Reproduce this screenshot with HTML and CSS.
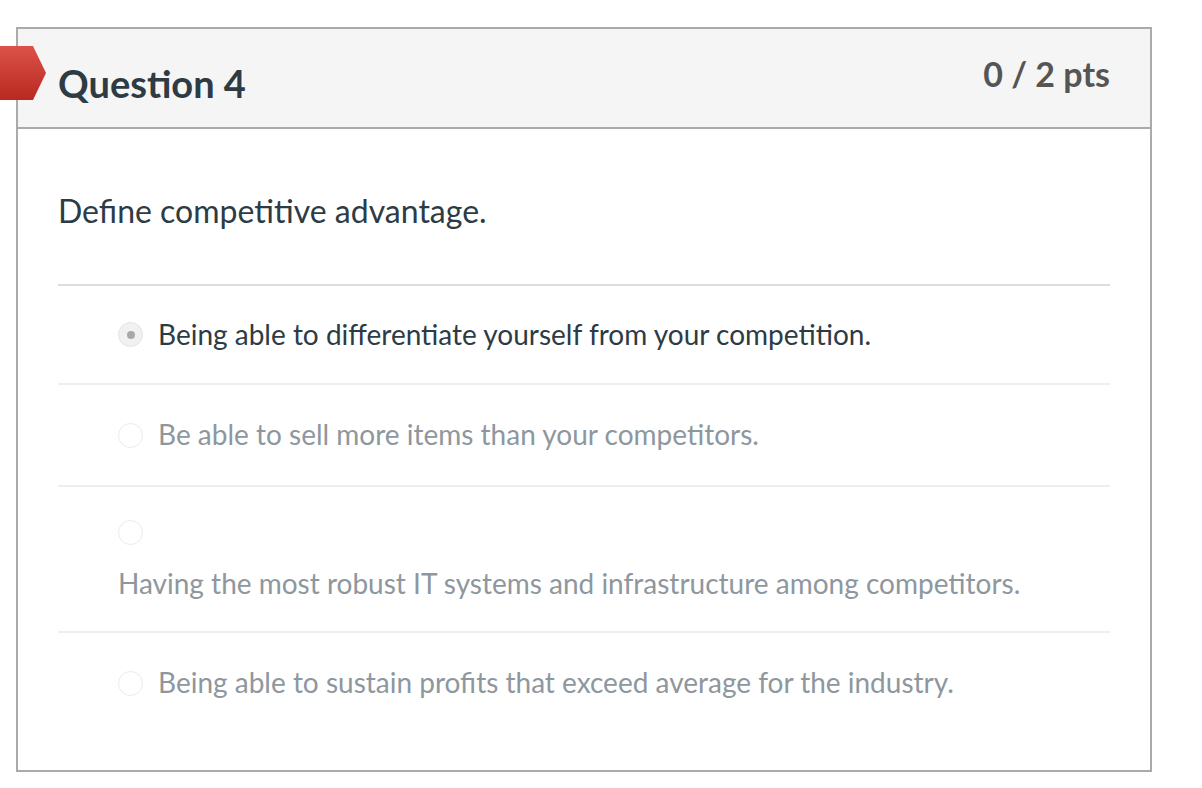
FILE: index.html
```html
<!DOCTYPE html>
<html>
<head>
<meta charset="utf-8">
<link rel="stylesheet" href="styles.css">
</head>
<body>
<div class="page">
  <div class="flag"></div>
  <div class="question">
    <div class="header">
      <h2 class="title">Question 4</h2>
      <div class="pts">0 / 2 pts</div>
    </div>
    <div class="content">
      <p class="qtext">Define competitive advantage.</p>
      <div class="answers">
        <div class="answer selected a1">
          <span class="radio"></span>
          <span class="label">Being able to differentiate yourself from your competition.</span>
        </div>
        <div class="answer a2">
          <span class="radio"></span>
          <span class="label">Be able to sell more items than your competitors.</span>
        </div>
        <div class="answer block">
          <span class="radio"></span>
          <div class="label">Having the most robust IT systems and infrastructure among competitors.</div>
        </div>
        <div class="answer last">
          <span class="radio"></span>
          <span class="label">Being able to sustain profits that exceed average for the industry.</span>
        </div>
      </div>
    </div>
  </div>
</div>
</body>
</html>
```
FILE: styles.css
```css
html, body {
  margin: 0;
  padding: 0;
  background: #fff;
}
body {
  font-family: Lato, "Open Sans", sans-serif;
  color: #2d3b45;
}
.page {
  position: relative;
  padding: 27px 0 0 16px;
  width: 1136px;
}
.flag {
  position: absolute;
  left: 0;
  top: 46px;
  width: 46px;
  height: 54px;
  background: linear-gradient(#dc5249, #b8291f);
  clip-path: polygon(0 0, 33px 0, 46px 27px, 33px 54px, 0 54px);
}
.question {
  border: 2px solid #aaaaaa;
  height: 745px;
  box-sizing: border-box;
}
.header {
  background: #f5f5f5;
  border-bottom: 2px solid #aaaaaa;
  height: 100px;
  box-sizing: border-box;
  display: flex;
  justify-content: space-between;
  padding: 0 40px;
}
.title {
  margin: 0;
  font-size: 38px;
  font-weight: 700;
  color: #2d3b45;
  line-height: 38px;
  padding-top: 35px;
}
.pts {
  font-size: 34px;
  font-weight: 700;
  color: #555555;
  line-height: 34px;
  padding-top: 28px;
}
.content {
  padding: 0 40px;
}
.qtext {
  margin: 0;
  font-size: 32px;
  line-height: 32px;
  padding-top: 66px;
  padding-bottom: 57px;
  border-bottom: 2px solid #dddddd;
}
.answer {
  display: flex;
  align-items: center;
  padding-left: 60px;
  border-bottom: 2px solid #eeeeee;
  font-size: 28px;
  line-height: 1.2;
  color: #8e979e;
}
.a1 { height: 97px; }
.a2 { height: 100px; }
.answer.selected {
  color: #2d3b45;
}
.answer.block {
  display: block;
  height: 146px;
  padding-top: 33px;
  box-sizing: border-box;
}
.answer.last {
  height: 100px;
  border-bottom: none;
}
.radio {
  width: 25px;
  height: 25px;
  border-radius: 50%;
  border: 1px solid #ebebeb;
  box-sizing: border-box;
  background: #fff;
  flex: none;
  margin-right: 15px;
  position: relative;
  display: inline-block;
}
.answer.block .radio {
  display: block;
}
.answer.block .label {
  margin-top: 22px;
}
.selected .radio {
  background: #f1f1f1;
  border-color: #e4e4e4;
}
.selected .radio::after {
  content: "";
  position: absolute;
  left: 7.5px;
  top: 7.5px;
  width: 8px;
  height: 8px;
  border-radius: 50%;
  background: #a8a8a8;
}
```
